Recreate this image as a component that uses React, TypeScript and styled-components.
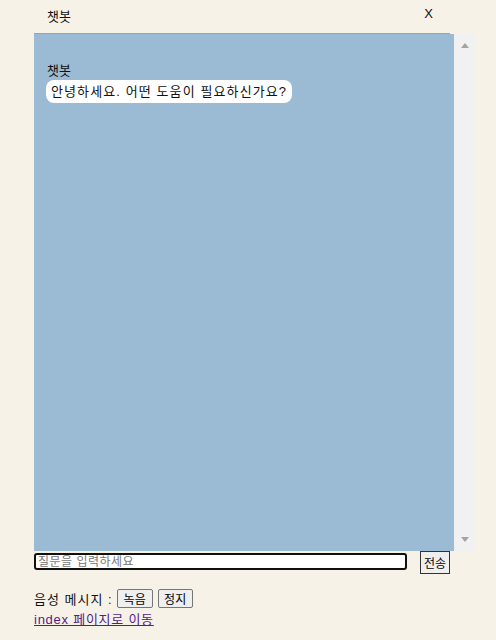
import React from "react";
import styled, { createGlobalStyle } from "styled-components";

const Global = createGlobalStyle`
  html, body { margin: 0; padding: 0; background: #f7f2e8; }
  body {
    font-family: "Liberation Sans", "Noto Sans CJK KR", sans-serif;
    font-size: 13px;
    color: #111;
  }
`;

const Page = styled.div`
  width: 496px;
  height: 640px;
  padding-left: 34px;
  box-sizing: border-box;
  background: #f7f2e8;
  overflow: hidden;
`;

const Header = styled.div`
  width: 416px;
  height: 34px;
  border-bottom: 1px solid #9aa3ad;
  display: flex;
  align-items: center;
  justify-content: space-between;
  padding: 0 17px 0 13px;
  box-sizing: border-box;
`;

const Title = styled.span`
  font-size: 13px;
  line-height: 16px;
`;

const Close = styled.span`
  font-size: 13px;
  line-height: 16px;
  margin-top: -5px;
`;

const ChatRow = styled.div`
  display: flex;
  height: 517px;
`;

const Messages = styled.div`
  width: 420px;
  background: #9bbad4;
  padding: 29px 12px;
  box-sizing: border-box;
`;

const Scrollbar = styled.div`
  width: 21px;
  background: #f1f1f1;
  display: flex;
  flex-direction: column;
  justify-content: space-between;
  align-items: center;
  padding: 9px 0 9px;
  box-sizing: border-box;
`;

const Arrow = styled.div<{ $down?: boolean }>`
  width: 0;
  height: 0;
  border-left: 4px solid transparent;
  border-right: 4px solid transparent;
  ${(p) =>
    p.$down
      ? "border-top: 5px solid #a3a3a3;"
      : "border-bottom: 5px solid #a3a3a3;"}
`;

const Sender = styled.div`
  font-size: 13px;
  line-height: 16px;
  margin-left: 1px;
`;

const Bubble = styled.div`
  display: inline-block;
  background: #ffffff;
  border-radius: 8px;
  padding: 0 5px;
  height: 23px;
  line-height: 23px;
  font-size: 13px;
  letter-spacing: 1.1px;
  margin-top: 1px;
`;

const InputRow = styled.div`
  display: flex;
  align-items: flex-start;
  width: 420px;
`;

const Input = styled.input`
  width: 373px;
  height: 17px;
  margin-top: 2px;
  border: 2px solid #101010;
  border-radius: 3px;
  background: #fff;
  box-sizing: border-box;
  padding: 0 2px;
  font-family: "Liberation Sans", "Noto Sans CJK KR", sans-serif;
  font-size: 12px;
  letter-spacing: 0.5px;
  outline: none;
  &::placeholder { color: #777; }
`;

const SendButton = styled.button`
  margin-left: 13px;
  width: 30px;
  height: 23px;
  padding: 0;
  border: 1px solid #333;
  background: #efefef;
  font-family: "Liberation Sans", "Noto Sans CJK KR", sans-serif;
  font-size: 12px;
  color: #000;
`;

const VoiceRow = styled.div`
  display: flex;
  align-items: center;
  margin-top: 15px;
  height: 19px;
  gap: 5px;
`;

const Label = styled.span`
  font-size: 13px;
  letter-spacing: 1px;
  margin-right: -1px;
`;

const SmallButton = styled.button<{ $w: number }>`
  width: ${(p) => p.$w}px;
  height: 19px;
  padding: 0;
  border: 1px solid #767676;
  border-radius: 2px;
  background: #efefef;
  font-family: "Liberation Sans", "Noto Sans CJK KR", sans-serif;
  font-size: 12px;
  color: #000;
`;

const Link = styled.a`
  display: inline-block;
  margin-top: 4px;
  color: #551a8b;
  font-size: 13px;
  line-height: 16px;
  letter-spacing: 0.75px;
  text-decoration: underline;
`;

export default function App() {
  return (
    <>
      <Global />
      <Page>
        <Header>
          <Title>챗봇</Title>
          <Close>X</Close>
        </Header>
        <ChatRow>
          <Messages>
            <Sender>챗봇</Sender>
            <Bubble>안녕하세요. 어떤 도움이 필요하신가요?</Bubble>
          </Messages>
          <Scrollbar>
            <Arrow />
            <Arrow $down />
          </Scrollbar>
        </ChatRow>
        <InputRow>
          <Input placeholder="질문을 입력하세요" />
          <SendButton>전송</SendButton>
        </InputRow>
        <VoiceRow>
          <Label>음성 메시지 :</Label>
          <SmallButton $w={36}>녹음</SmallButton>
          <SmallButton $w={35}>정지</SmallButton>
        </VoiceRow>
        <Link href="#">index 페이지로 이동</Link>
      </Page>
    </>
  );
}
